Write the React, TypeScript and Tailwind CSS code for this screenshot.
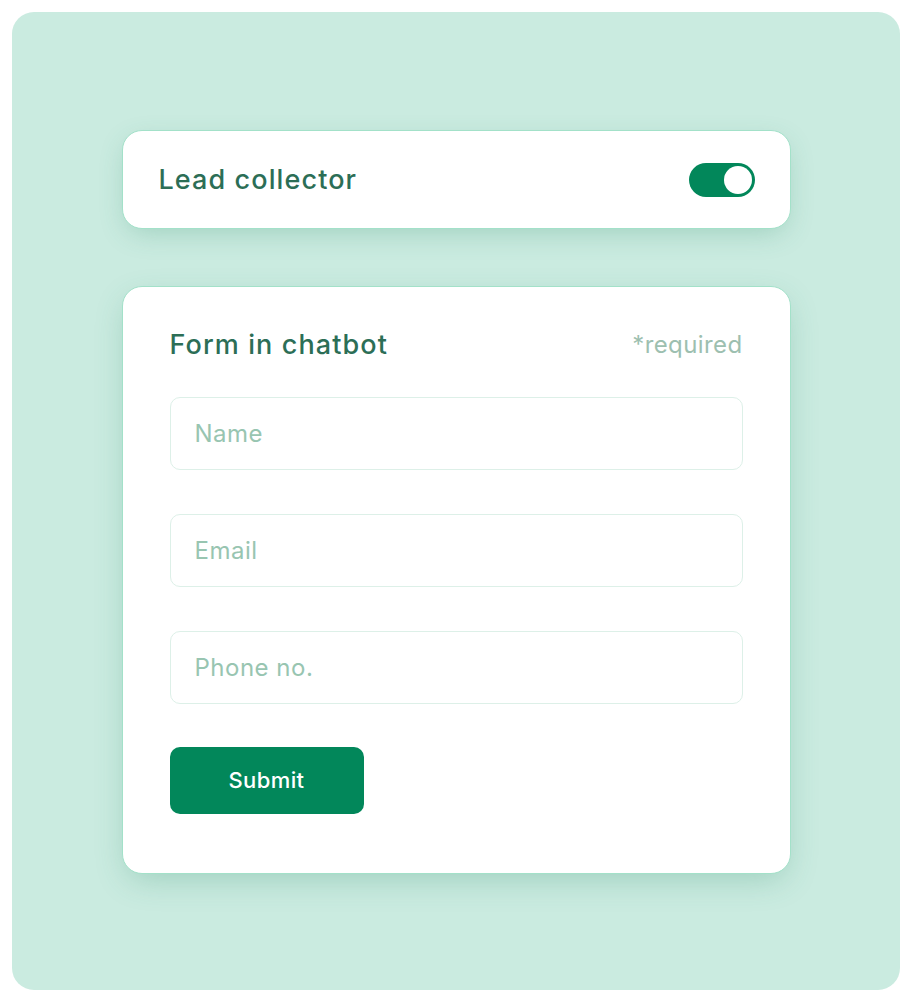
export default function App() {
  const fields = ["Name", "Email", "Phone no."];

  return (
    <div className="min-h-screen w-[912px] bg-white p-3 font-['Inter','Liberation_Sans',sans-serif]">
      <div className="flex h-[978px] w-[888px] flex-col items-center rounded-[22px] bg-[#CAEBE0] pt-[118px]">
        <div className="flex h-[99px] w-[669px] items-center justify-between rounded-[20px] border border-[#A3E1C9] bg-white pl-9 pr-[35px] shadow-[0_8px_28px_-6px_rgba(50,140,105,0.3)]">
          <span className="pt-[2px] text-[27px] font-medium tracking-[1.1px] text-[#2C6E56]">
            Lead collector
          </span>
          <button
            type="button"
            aria-label="Toggle lead collector"
            className="flex h-[34px] w-[66px] items-center justify-end rounded-full bg-[#02875A] p-[3px]"
          >
            <span className="h-[28px] w-[28px] rounded-full bg-white" />
          </button>
        </div>

        <div className="mt-[57px] flex w-[669px] flex-col rounded-[20px] border border-[#A3E1C9] bg-white px-[47px] pb-[59px] pt-[38px] shadow-[0_10px_32px_-6px_rgba(50,140,105,0.3)]">
          <div className="flex items-center justify-between">
            <h2 className="text-[27px] font-medium tracking-[1.1px] text-[#2C6E56]">
              Form in chatbot
            </h2>
            <span className="text-[24px] tracking-[0.4px] text-[#9DBFB0]">*required</span>
          </div>

          <div className="mt-[31px] flex flex-col gap-[44px]">
            {fields.map((f) => (
              <input
                key={f}
                type="text"
                placeholder={f}
                className="h-[73px] w-full rounded-[10px] border border-[#DDF0E8] bg-white px-6 text-[24px] tracking-[0.5px] text-[#2C6E56] placeholder:text-[#98C5B1] focus:outline-none"
              />
            ))}
          </div>

          <button
            type="button"
            className="mt-[43px] h-[67px] w-[194px] rounded-[10px] bg-[#02875A] text-[22px] font-medium tracking-[0.4px] text-white"
          >
            Submit
          </button>
        </div>
      </div>
    </div>
  );
}
